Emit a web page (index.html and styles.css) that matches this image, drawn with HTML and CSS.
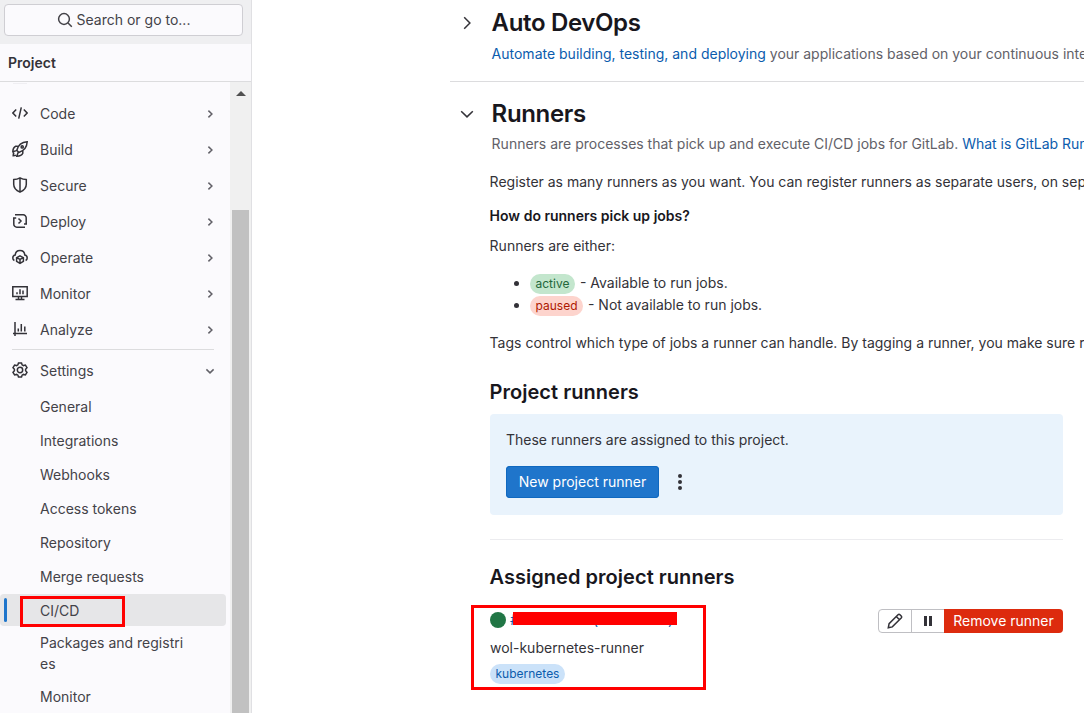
FILE: index.html
```html
<!DOCTYPE html>
<html lang="en">
<head>
<meta charset="utf-8">
<title>CI/CD Settings</title>
<link rel="stylesheet" href="styles.css">
</head>
<body>
<div class="app">
  <aside class="sidebar">
    <div class="topbar">
      <button class="search">
        <svg class="icon" viewBox="0 0 16 16"><circle cx="7" cy="7" r="5.4"/><path d="M11 11l3.8 3.8"/></svg>
        <span>Search or go to...</span>
      </button>
    </div>
    <div class="context">Project</div>
    <div class="nav-area">
      <nav class="nav">
        <div class="sticky-rule"></div>
        <a class="item"><svg class="icon" viewBox="0 0 16 16"><path d="M4.200 4.600L.9 8l3.300 3.400M11.800 4.600L15.100 8l-3.300 3.400M9.300 2.300L6.700 13.700"/></svg><span>Code</span><svg class="chev" viewBox="0 0 12 12"><path d="M4.400 2.600L7.900 6 4.400 9.400"/></svg></a>
        <a class="item"><svg class="icon" viewBox="0 0 16 16"><path d="M4.800 9.200C6 4.500 9.300 1.200 15.200.8c-.3 5.500-3.300 9.200-8.400 10.700zM5.800 5.200H3.700C1.800 6 .9 8 .8 10.800l3.600-1.200M10.800 9.800v2.500c-.8 1.900-2.800 2.900-6 2.900l1.300-3.600M2 11.500c-.6.900-.8 2-.8 3.200.9 0 1.900-.1 2.700-.6"/><circle cx="10.200" cy="5.900" r="1.100"/></svg><span>Build</span><svg class="chev" viewBox="0 0 12 12"><path d="M4.400 2.600L7.900 6 4.400 9.400"/></svg></a>
        <a class="item"><svg class="icon" viewBox="0 0 16 16"><path d="M8 .9C6 2 4 2.500 1.700 2.600v4.600c0 3.700 2.600 6.300 6.300 7.900 3.700-1.600 6.300-4.200 6.300-7.900V2.600C12 2.500 10 2 8 .9zM8 1v14"/></svg><span>Secure</span><svg class="chev" viewBox="0 0 12 12"><path d="M4.400 2.600L7.900 6 4.400 9.400"/></svg></a>
        <a class="item"><svg class="icon" viewBox="0 0 16 16"><path d="M3 1.800h8.200a3 3 0 0 1 3 3v6M13 14.200H4.800a3 3 0 0 1-3-3V5M1 5h3.200M12 10.900h3M6.500 5.500L9 8l-2.500 2.500"/></svg><span>Deploy</span><svg class="chev" viewBox="0 0 12 12"><path d="M4.400 2.600L7.900 6 4.400 9.400"/></svg></a>
        <a class="item"><svg class="icon" viewBox="0 0 16 16"><path d="M2.400 11.500C1.300 11 .8 10 .8 9c0-1.600 1-2.700 2.400-2.900C3.400 3.300 5.400 1.500 8 1.500s4.600 1.800 4.800 4.600c1.400.2 2.400 1.300 2.400 2.900 0 1-.5 2-1.600 2.500"/><path d="M8 6.800l3.400 1.800v3.800L8 14.400l-3.400-2V8.600zM4.800 8.700L8 10.500l3.200-1.800M8 10.500v3.700"/></svg><span>Operate</span><svg class="chev" viewBox="0 0 12 12"><path d="M4.400 2.600L7.900 6 4.400 9.400"/></svg></a>
        <a class="item"><svg class="icon" viewBox="0 0 16 16"><path d="M.8 1.800h14.400v9.800H.8zM6.500 12v2.300M9.500 12v2.300M3.500 14.400h9M5 7.200v2M8 4.300v4.900M11 5.600v3.600"/></svg><span>Monitor</span><svg class="chev" viewBox="0 0 12 12"><path d="M4.400 2.600L7.900 6 4.400 9.400"/></svg></a>
        <a class="item"><svg class="icon" viewBox="0 0 16 16"><path d="M3 1v14M1 12.600h14M6.300 7.500v3M9.300 3v7.500M12.800 5.500v5"/></svg><span>Analyze</span><svg class="chev" viewBox="0 0 12 12"><path d="M4.400 2.600L7.900 6 4.400 9.400"/></svg></a>
        <hr class="rule">
        <a class="item settings"><svg class="icon" viewBox="0 0 16 16"><path d="M6.500 .9h3l.6 1.900 1.300.8 2-.5 1.600 2.600L13.600 7.200v1.600l1.400 1.500-1.600 2.600-2-.5-1.300.8-.6 1.900h-3l-.6-1.900-1.300-.8-2 .5L1 10.300l1.400-1.500V7.200L1 5.700l1.600-2.600 2 .5 1.300-.8z"/><circle cx="8" cy="8" r="2.700"/></svg><span>Settings</span><svg class="chev" viewBox="0 0 12 12"><path d="M2.400 4.400L6 7.900l3.600-3.500"/></svg></a>
        <a class="sub">General</a>
        <a class="sub">Integrations</a>
        <a class="sub">Webhooks</a>
        <a class="sub">Access tokens</a>
        <a class="sub">Repository</a>
        <a class="sub">Merge requests</a>
        <a class="sub active">CI/CD<i class="mark"></i></a>
        <a class="sub tall">Packages and registri<br>es</a>
        <a class="sub">Monitor</a>
      </nav>
      <div class="scrollbar"><i class="arrow"></i><i class="thumb"></i></div>
    </div>
  </aside>

  <main class="main">
    <section class="section auto">
      <svg class="icon toggle" viewBox="0 0 16 16"><path d="M5.200 2.200L10.900 8l-5.700 5.800"/></svg>
      <div class="section-head">
        <h2>Auto DevOps</h2>
        <p class="desc"><a>Automate building, testing, and deploying</a> your applications based on your continuous integration</p>
      </div>
    </section>
    <section class="section runners">
      <svg class="icon toggle" viewBox="0 0 16 16"><path d="M2.200 5.200L8 10.900l5.800-5.700"/></svg>
      <div class="section-head">
        <h2>Runners</h2>
        <p class="desc">Runners are processes that pick up and execute CI/CD jobs for GitLab. <a>What is GitLab Runner?</a></p>
      </div>
    </section>
    <div class="content">
      <p class="intro">Register as many runners as you want. You can register runners as separate users, on separate servers,</p>
      <p class="question">How do runners pick up jobs?</p>
      <p class="either">Runners are either:</p>
      <ul class="states">
        <li><span class="badge green">active</span><span>- Available to run jobs.</span></li>
        <li><span class="badge red">paused</span><span>- Not available to run jobs.</span></li>
      </ul>
      <p class="tags">Tags control which type of jobs a runner can handle. By tagging a runner, you make sure runners</p>
      <h4>Project runners</h4>
      <div class="panel">
        <p>These runners are assigned to this project.</p>
        <div class="actions">
          <button class="primary">New project runner</button>
          <svg class="dots" viewBox="0 0 16 16"><circle cx="8" cy="2" r="2"/><circle cx="8" cy="8" r="2"/><circle cx="8" cy="14" r="2"/></svg>
        </div>
      </div>
      <h4 class="assigned">Assigned project runners</h4>
      <div class="runner">
        <div class="info">
          <div class="id"><i class="status"></i><span class="hash">#</span><span class="open">(</span><span class="close">)</span><i class="redaction"></i></div>
          <div class="name">wol-kubernetes-runner</div>
          <span class="badge blue">kubernetes</span>
          <i class="callout runner-callout"></i>
        </div>
        <div class="buttons">
          <button class="btn"><svg class="icon" viewBox="0 0 16 16"><path d="M1.300 14.700l.8-4L11 1.800q1-.9 2 0l1.200 1.200q.9 1 0 2L5.300 13.900zM9.300 3.500l3.200 3.200"/></svg></button>
          <button class="btn"><svg class="icon pause" viewBox="0 0 16 16"><path d="M5.500 3v10M10.500 3v10"/></svg></button>
          <button class="danger">Remove runner</button>
        </div>
      </div>
    </div>
  </main>
  <i class="callout nav-callout"></i>
</div>
</body>
</html>
```
FILE: styles.css
```css
* { box-sizing: border-box; }
body {
  margin: 0;
  font: 14px/20px Inter, "Noto Sans", sans-serif;
  color: #333238;
  background: #fff;
  overflow: hidden;
}
p, h2, h4, ul { margin: 0; padding: 0; }
button { font: inherit; margin: 0; padding: 0; }
a { text-decoration: none; }
.app { position: relative; display: flex; width: 1084px; height: 713px; overflow: hidden; }
.icon { width: 16px; height: 16px; flex: none; fill: none; stroke: currentColor; stroke-width: 1.5; }

/* Sidebar */
.sidebar {
  width: 252px; flex: none; display: flex; flex-direction: column;
  background: #fbfafd; border-right: 1px solid #e0e0e3; color: #434248;
}
.topbar { height: 44px; flex: none; padding: 4px 8px 0 4px; background: #efeff1; }
.search {
  display: flex; align-items: center; justify-content: center; gap: 4px;
  width: 239px; height: 32px; border: 1px solid #cfced3; border-radius: 4px;
  background: #fbfafd; color: #434248;
}
.context {
  height: 38px; flex: none; padding: 9px 8px; line-height: 20px; font-weight: 600;
  border-bottom: 1px solid #dcdcde; color: #333238;
}
.nav-area { flex: 1; min-height: 0; display: flex; overflow: hidden; }
.nav { width: 230px; flex: none; }
.sticky-rule { width: 14px; height: 1px; margin: 1px 0 14px 13px; background: #efeef2; }
.item {
  display: flex; align-items: center; height: 32px; margin-bottom: 4px;
  padding: 0 14px 0 12px; gap: 12px;
}
.item span { flex: 1; }
.item .icon { margin-bottom: 2px; color: #333238; }
.chev { width: 12px; height: 12px; fill: none; stroke: #626168; stroke-width: 1.5; }
.rule { border: 0; height: 1px; margin: -1px 16px 5px 12px; background: #dcdcde; }
.settings { margin-bottom: 3px; }
.sub { position: relative; display: block; height: 32px; margin-bottom: 2px; padding: 7px 0 5px 40px; }
.active { width: 226px; background: #e6e6e8; border-radius: 4px; }
.mark { position: absolute; left: 4px; top: 4px; width: 3px; height: 24px; border-radius: 2px; background: #1f75cb; }
.tall { height: 50px; line-height: 21px; padding-top: 4px; }
.scrollbar { flex: 1; background: #f0f0f0; padding: 9px 2px 0; display: flex; flex-direction: column; }
.arrow {
  width: 0; height: 0; margin-left: 3.5px; margin-bottom: 114px;
  border: 5px solid transparent; border-top: 0; border-bottom-color: #505050;
}
.thumb { width: 17px; flex: 1; background: #c1c1c1; }

/* Main column */
.main { flex: 1; min-width: 0; padding-left: 198px; overflow: hidden; }
.section { display: flex; padding-left: 9px; gap: 16.6px; }
.auto { height: 82px; padding-top: 8px; border-bottom: 1px solid #dcdcde; }
.runners { height: 90px; padding-top: 17px; }
.toggle { margin-top: 7px; }
h2 { font-size: 24px; line-height: 30px; font-weight: 600; letter-spacing: -.35px; color: #18171d; }
.desc { margin-top: 6px; color: #626168; white-space: nowrap; }
.runners .desc { margin-top: 5px; }
.desc a { color: #0b5cad; }
.content { width: 613px; padding-left: 40px; }
.content > p { white-space: nowrap; margin-left: -.4px; }
.content .question { margin-top: 14px; font-weight: 600; color: #18171d; }
.content .either { margin-top: 10px; }
.states { list-style: none; margin-top: 16px; padding-left: 40px; }
.states li { position: relative; display: flex; align-items: center; gap: 5px; height: 22px; }
.states li::before {
  content: ""; position: absolute; left: -16px; top: 9px; width: 5px; height: 5px;
  border-radius: 50%; background: #333238;
}
.states .badge { margin-top: 2px; }
.badge { display: inline-block; height: 20px; padding: 2px 5.5px; border-radius: 10px; font-size: 12px; line-height: 16px; }
.green { background: #c3e6cd; color: #24663b; }
.red { background: #fdd4cd; color: #ae1800; }
.blue { background: #cbe2f9; color: #0b5cad; }
.content .tags { margin-top: 17px; }
h4 { margin-top: 26px; font-size: 20px; line-height: 26px; font-weight: 600; color: #18171d; text-indent: -.5px; letter-spacing: .04px; }
.panel { height: 101px; margin-top: 9px; padding: 16px; border-radius: 4px; background: #e9f3fc; }
.actions { display: flex; align-items: center; gap: 13px; margin-top: 16px; }
.primary {
  width: 153px; height: 32px; border: 0; border-radius: 4px; color: #fff;
  background: #1f75cb; box-shadow: inset 0 0 0 1px #1068bf;
}
.dots { width: 16px; height: 16px; fill: #333238; }
.assigned { margin-top: 24px; padding-top: 24px; border-top: 1px solid #ececef; }
.runner { display: flex; justify-content: space-between; align-items: flex-start; margin-top: 19px; }
.info { position: relative; }
.id { position: relative; display: flex; height: 24px; align-items: center; margin-top: -1px; color: #0b5cad; }
.status { width: 16px; height: 16px; border-radius: 50%; background: #217645; }
.hash { margin-left: 4px; }
.open { margin-left: 74px; }
.close { margin-left: 70px; }
.redaction { position: absolute; left: 23px; top: 4px; width: 164px; height: 13px; background: #f00; }
.name { margin: 6px 0; }
.info .badge { display: block; width: 75px; }
.buttons { display: flex; }
.btn {
  display: flex; align-items: center; justify-content: center; width: 34px; height: 24px;
  border: 1px solid #bfbfc3; background: #fff; color: #333238;
}
.btn:first-child { border-radius: 4px 0 0 4px; }
.btn + .btn { margin-left: -1px; }
.pause { stroke-width: 3; }
.danger {
  width: 119px; height: 24px; margin-left: -1px; border: 0; border-radius: 0 4px 4px 0;
  background: #dd2b0e; color: #fff;
}

/* Highlight frames */
.callout { position: absolute; border: 3px solid #f00; }
.nav-callout { left: 20px; top: 596px; width: 105px; height: 31px; }
.runner-callout { left: -19px; top: -4px; width: 235px; height: 85px; }
```
